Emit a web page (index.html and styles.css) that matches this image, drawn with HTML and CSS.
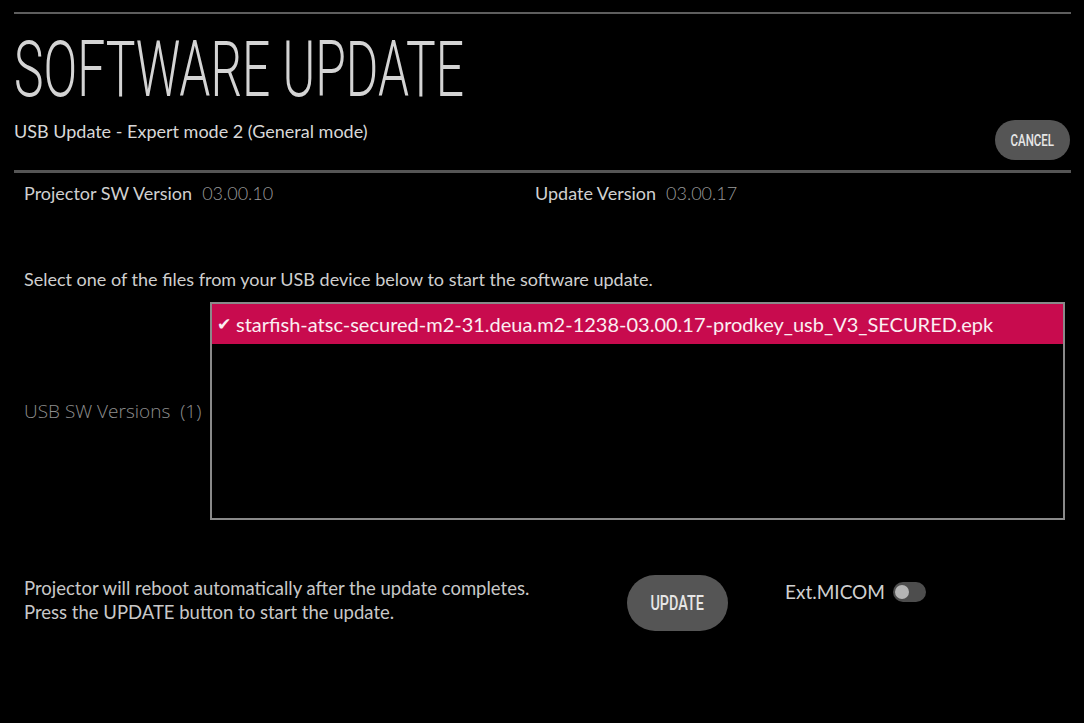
FILE: index.html
```html
<!DOCTYPE html>
<html lang="en">
<head>
<meta charset="utf-8">
<title>Software Update</title>
<link rel="stylesheet" href="styles.css">
</head>
<body>
<div class="screen">
  <div class="rule rule-top"></div>
  <div class="header">
    <div class="header-text">
      <h1 class="title"><span class="title-inner">SOFTWARE UPDATE</span></h1>
      <div class="subtitle">USB Update - Expert mode 2 (General mode)</div>
    </div>
    <button class="pill cancel"><span class="pill-label">CANCEL</span></button>
  </div>
  <div class="rule rule-mid"></div>

  <div class="versions">
    <div class="ver ver-left"><span class="ver-label">Projector SW Version</span><span class="ver-value">03.00.10</span></div>
    <div class="ver ver-right"><span class="ver-label">Update Version</span><span class="ver-value">03.00.17</span></div>
  </div>

  <p class="instruction">Select one of the files from your USB device below to start the software update.</p>

  <div class="files">
    <div class="files-label">USB SW Versions&nbsp; (1)</div>
    <div class="file-list">
      <div class="file-item selected"><span class="check">&#10004;</span>starfish-atsc-secured-m2-31.deua.m2-1238-03.00.17-prodkey_usb_V3_SECURED.epk</div>
    </div>
  </div>

  <div class="footer">
    <div class="note">
      <div>Projector will reboot automatically after the update completes.</div>
      <div>Press the UPDATE button to start the update.</div>
    </div>
    <button class="pill update"><span class="pill-label">UPDATE</span></button>
    <div class="micom">
      <span class="micom-label">Ext.MICOM</span>
      <span class="toggle"><span class="knob"></span></span>
    </div>
  </div>
</div>
</body>
</html>
```
FILE: styles.css
```css
html, body {
  margin: 0;
  padding: 0;
  background: #000;
}
body {
  width: 1084px;
  height: 723px;
  overflow: hidden;
  font-family: Lato, "Open Sans", sans-serif;
  color: #c8c8c8;
}
.screen {
  padding: 12px 13px 0 14px;
}
.rule {
  background: #5e5e5e;
}
.rule-top {
  height: 2px;
}
.rule-mid {
  height: 3px;
  background: #555;
}
.header {
  display: flex;
  justify-content: space-between;
  align-items: flex-end;
}
.header-text {
  padding-bottom: 28px;
}
.title {
  margin: 0;
  padding-top: 17px;
  height: 74px;
  font-family: Roboto, sans-serif;
  font-weight: 300;
  font-size: 78px;
  line-height: 78px;
  color: #d4d4d4;
  white-space: nowrap;
}
.title-inner {
  display: inline-block;
  transform: scaleX(0.638);
  transform-origin: 0 0;
}
.subtitle {
  margin-top: 15px;
  font-size: 18px;
  line-height: 22px;
  color: #d8d8d8;
  white-space: nowrap;
}
.pill {
  border: none;
  background: #555;
  color: #e6e6e6;
  border-radius: 999px;
  font-family: Roboto, sans-serif;
  font-weight: 500;
  display: flex;
  align-items: center;
  justify-content: center;
  padding: 0;
}
.pill-label {
  display: inline-block;
  transform: scaleX(0.72);
}
.cancel {
  width: 75px;
  height: 40px;
  font-size: 16px;
  margin-right: 1px;
  margin-bottom: 10px;
}
.versions {
  display: flex;
  padding: 8px 0 0 10px;
  font-size: 18px;
  line-height: 24px;
}
.ver-left {
  width: 511px;
}
.ver-label {
  color: #d0d0d0;
  margin-right: 10px;
}
.ver-value {
  color: #9a9a9a;
  font-weight: 300;
}
.instruction {
  margin: 62px 0 0 10px;
  font-size: 18px;
  line-height: 24px;
  color: #cfcfcf;
}
.files {
  display: flex;
  align-items: center;
  margin-top: 11px;
}
.files-label {
  width: 186px;
  padding-left: 10px;
  font-family: "Open Sans", sans-serif;
  font-weight: 300;
  font-size: 19px;
  color: #8e8e8e;
  white-space: nowrap;
}
.file-list {
  width: 851px;
  height: 214px;
  border: 2px solid #8a8a8a;
  flex-shrink: 0;
}
.file-item {
  height: 40px;
  line-height: 40px;
  padding-left: 5px;
  font-size: 20px;
  white-space: nowrap;
}
.selected {
  background: #c80b4e;
  color: #fbeef2;
}
.check {
  font-size: 17px;
  margin-right: 5px;
  position: relative;
  top: -2px;
}
.footer {
  display: flex;
  align-items: flex-start;
  margin-top: 54px;
  padding-left: 10px;
}
.note {
  width: 603px;
  padding-top: 2px;
  font-size: 18.5px;
  line-height: 24px;
  color: #c8c8c8;
  white-space: nowrap;
}
.update {
  width: 101px;
  height: 56px;
  margin-top: 1px;
  font-size: 20px;
}
.micom {
  display: flex;
  align-items: center;
  margin-left: 57px;
  margin-top: 6px;
}
.micom-label {
  font-size: 19px;
  color: #d0d0d0;
}
.toggle {
  width: 33px;
  height: 20px;
  margin-left: 8px;
  border-radius: 10px;
  background: #4d4d4d;
  display: flex;
  align-items: center;
  padding-left: 2px;
  box-sizing: border-box;
}
.knob {
  width: 14px;
  height: 14px;
  border-radius: 50%;
  background: #b5b5b5;
}
```
